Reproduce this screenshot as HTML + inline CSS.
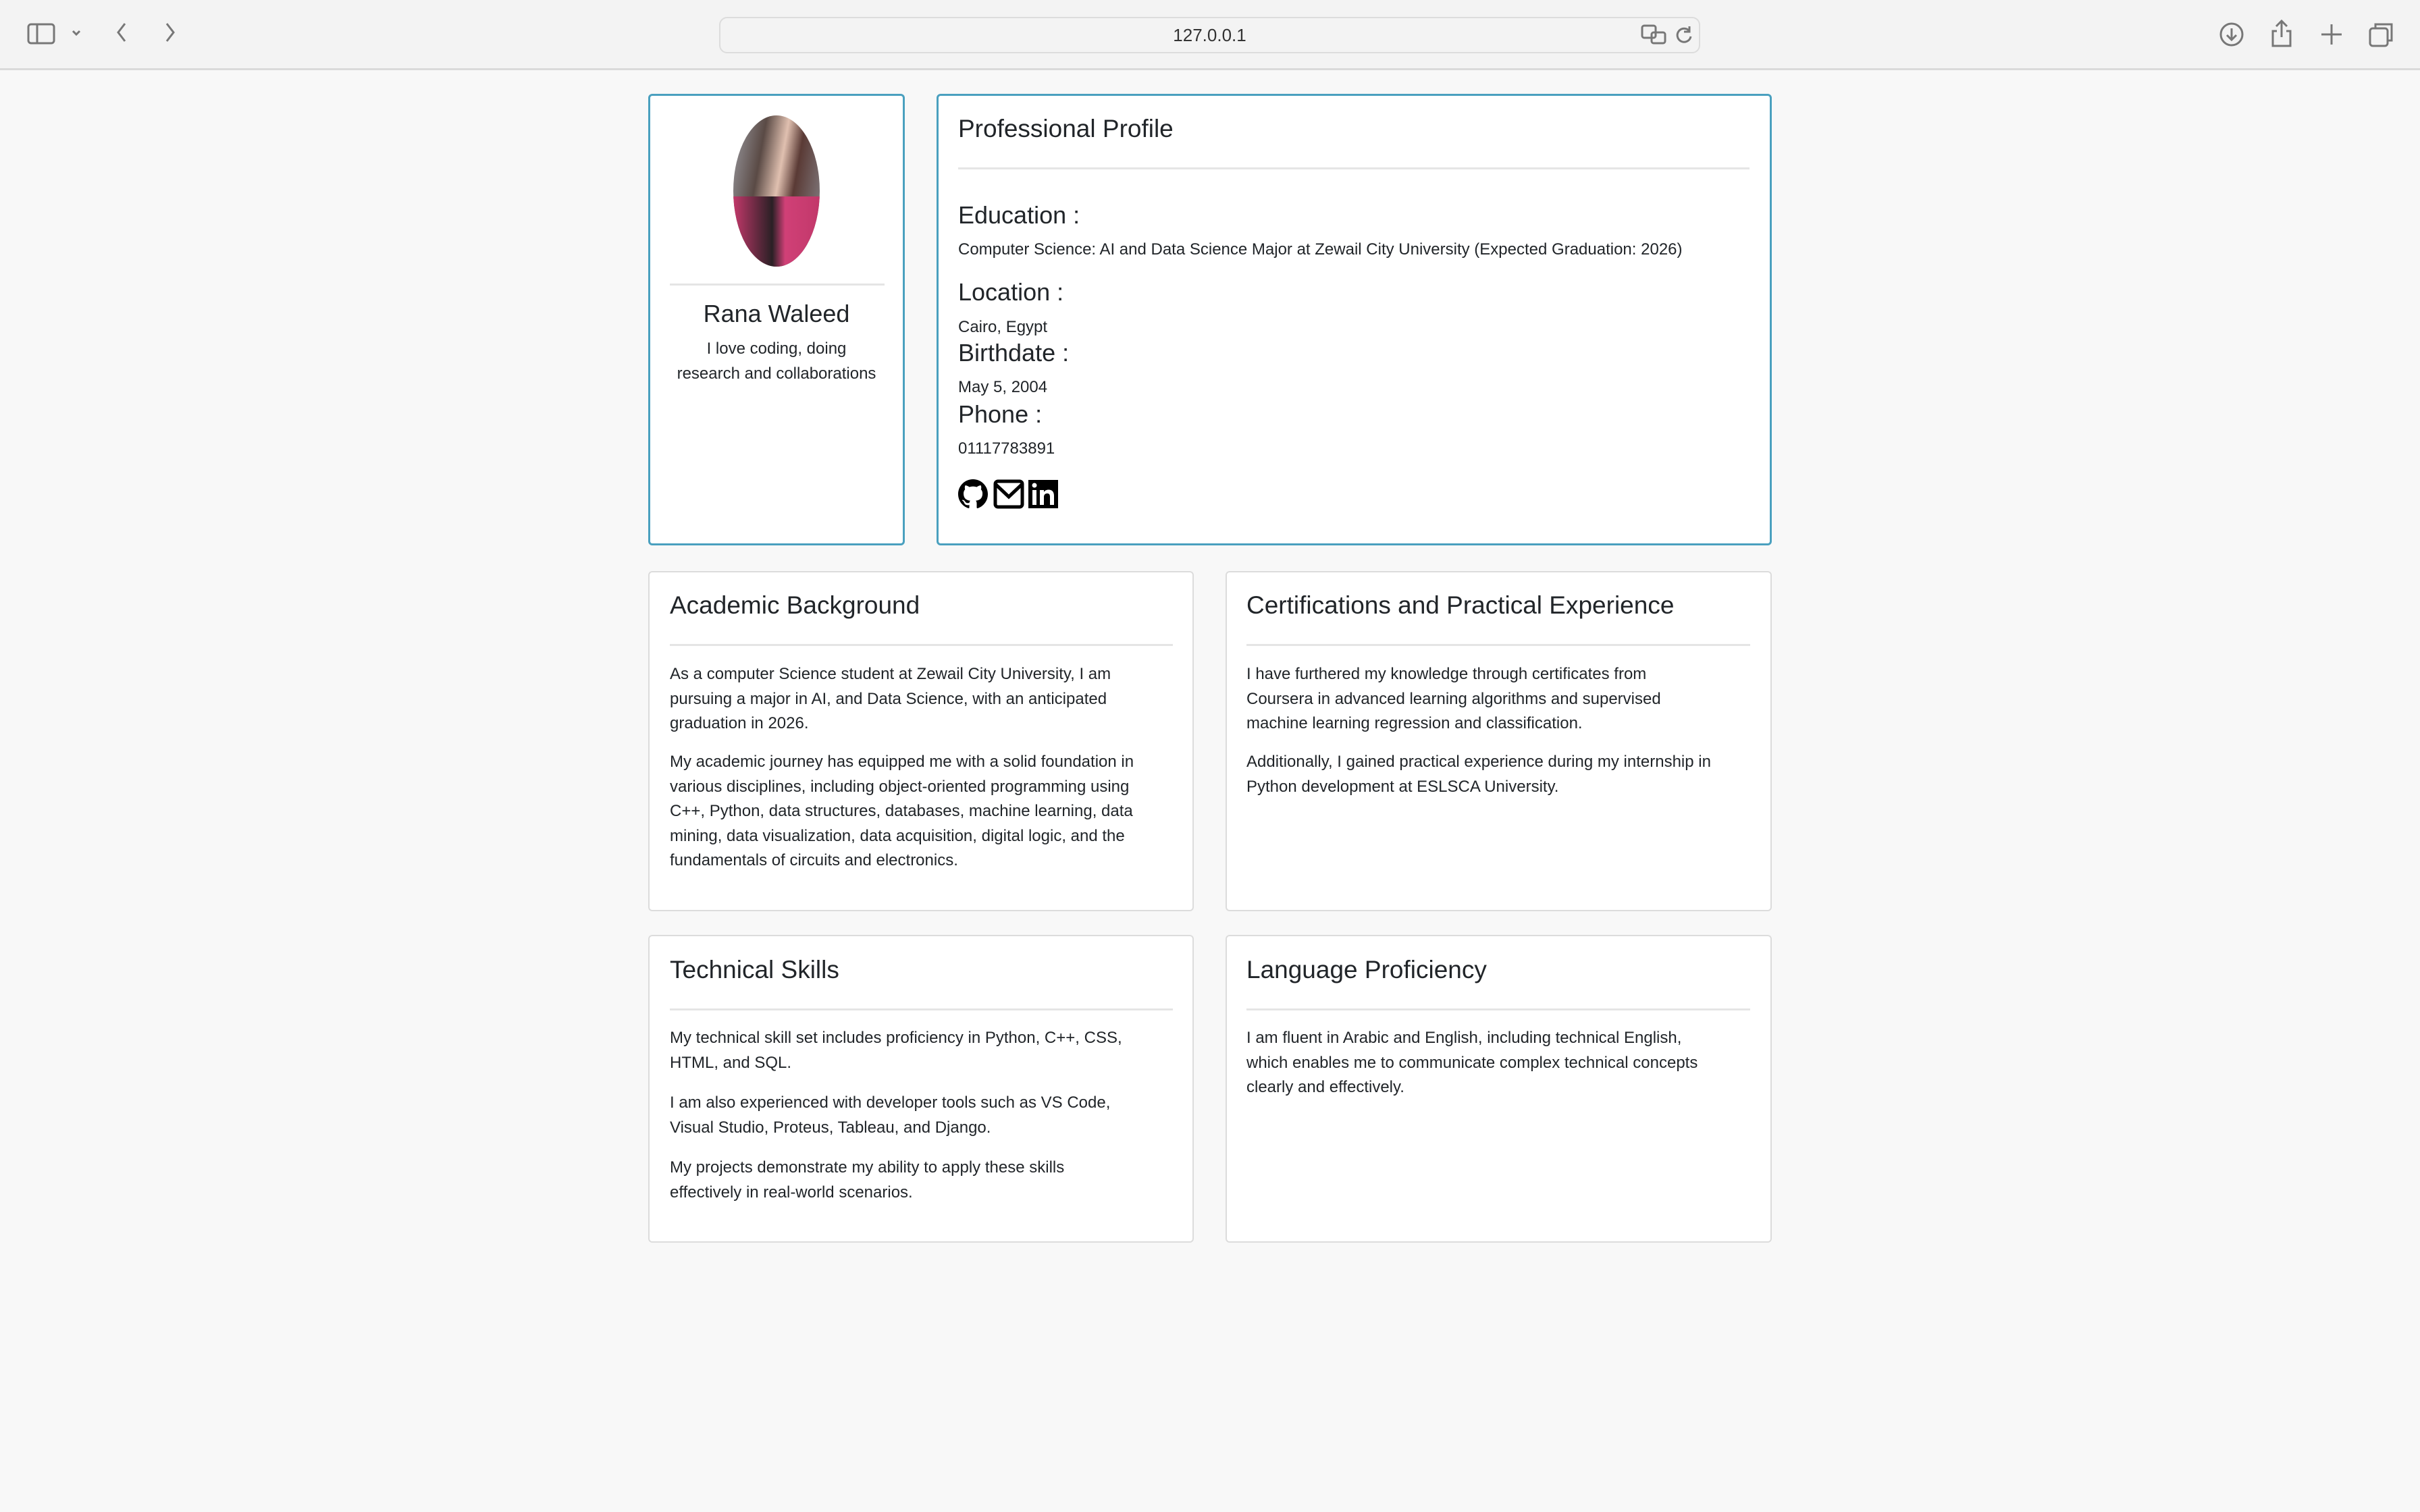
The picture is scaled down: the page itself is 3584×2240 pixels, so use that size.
<!DOCTYPE html>
<html><head><meta charset="utf-8"><style>
*{box-sizing:border-box;margin:0;padding:0}
body{width:3584px;height:2240px;background:#f8f8f8;font-family:"Liberation Sans",sans-serif;color:#212529;position:relative;overflow:hidden}
.bar{position:absolute;left:0;top:0;width:3584px;height:104px;background:#f3f3f3;border-bottom:3px solid #dadada}
.url{position:absolute;left:1065px;top:25px;width:1453px;height:54px;border:2px solid #dcdcdc;border-radius:12px;background:#f3f3f3;text-align:center;font-size:26px;line-height:50px;color:#333}
.card{position:absolute;background:#fff;border:2px solid #dcdcdc;border-radius:6px}
.blue{border:3px solid #4aa0bf}
.a{position:absolute;white-space:nowrap}
.h{font-size:37px}
.t{font-size:24px;line-height:36.5px}
.hr{position:absolute;height:3px;background:#e5e5e5}
.ic{position:absolute;top:40px;stroke:#777;fill:none;stroke-width:3}
</style></head><body>
<div class="bar">
<svg class="ic" style="left:40px;top:34px" width="42" height="32"><rect x="2" y="2" width="38" height="28" rx="4"/><line x1="15" y1="2" x2="15" y2="30"/></svg>
<svg class="ic" style="left:106px;top:44px" width="14" height="10"><path d="M2 2l5 5 5-5"/></svg>
<svg class="ic" style="left:172px;top:33px" width="16" height="30"><path d="M13 2L3 15l10 13"/></svg>
<svg class="ic" style="left:244px;top:33px" width="16" height="30"><path d="M3 2l10 13L3 28"/></svg>
<div class="url">127.0.0.1</div>
<svg class="ic" style="left:2430px;top:36px" width="40" height="30"><rect x="2" y="2" width="20" height="18" rx="3"/><rect x="16" y="12" width="20" height="16" rx="3"/></svg>
<svg class="ic" style="left:2480px;top:36px" width="28" height="30"><path d="M22 10A10 10 0 1 0 24 18M22 3v8h-8"/></svg>
<svg class="ic" style="left:3286px;top:32px" width="38" height="38"><circle cx="19" cy="19" r="16"/><path d="M19 10v17M12 20l7 7 7-7"/></svg>
<svg class="ic" style="left:3362px;top:28px" width="34" height="42"><path d="M17 3v24M9 11l8-8 8 8M10 18H4v22h26V18h-6"/></svg>
<svg class="ic" style="left:3436px;top:34px" width="34" height="34"><path d="M17 2v30M2 17h30"/></svg>
<svg class="ic" style="left:3508px;top:32px" width="38" height="38"><rect x="2" y="10" width="26" height="26" rx="4"/><path d="M10 10V4h24v24h-6"/></svg>
</div>

<div class="card blue" style="left:960px;top:139px;width:380px;height:669px"></div>
<div class="a" style="left:1086px;top:171px;width:128px;height:224px;border-radius:50%;overflow:hidden;background:linear-gradient(100deg,#9a9aa0 0%,#5a4a45 30%,#e0c0b0 50%,#5a3a35 65%,#8a8a90 100%)"><div style="position:absolute;left:0;top:120px;width:128px;height:110px;background:linear-gradient(90deg,#c2386a,#2a2025 45%,#d04077 60%,#c2386a)"></div></div>
<div class="hr" style="left:992px;top:420px;width:318px"></div>
<div class="a h" style="left:960px;width:380px;text-align:center;top:444px;font-size:36px">Rana Waleed</div>
<div class="a t" style="left:960px;width:380px;text-align:center;top:499px">I love coding, doing<br>research and collaborations</div>

<div class="card blue" style="left:1387px;top:139px;width:1237px;height:669px"></div>
<div class="a h" style="left:1419px;top:170px">Professional Profile</div>
<div class="hr" style="left:1419px;top:248px;width:1172px"></div>
<div class="a h" style="left:1419px;top:298px;font-size:36px">Education :</div>
<div class="a t" style="left:1419px;top:352px">Computer Science: AI and Data Science Major at Zewail City University (Expected Graduation: 2026)</div>
<div class="a h" style="left:1419px;top:412px;font-size:36px">Location :</div>
<div class="a t" style="left:1419px;top:467px">Cairo, Egypt</div>
<div class="a h" style="left:1419px;top:502px;font-size:36px">Birthdate :</div>
<div class="a t" style="left:1419px;top:556px">May 5, 2004</div>
<div class="a h" style="left:1419px;top:593px;font-size:36px">Phone :</div>
<div class="a t" style="left:1419px;top:647px">01117783891</div>
<svg class="a" style="left:1419px;top:710px" width="44" height="44" viewBox="0 0 16 16"><path d="M8 0C3.58 0 0 3.58 0 8c0 3.540 2.29 6.53 5.47 7.59.4.07.55-.17.55-.38v-1.34c-2.23.48-2.7-1.07-2.7-1.070-.36-.92-.89-1.17-.89-1.17-.73-.5.06-.49.06-.49.8.06 1.23.83 1.23.83.71 1.22 1.87.87 2.33.66.07-.52.28-.87.51-1.07-1.78-.2-3.64-.89-3.64-3.95 0-.87.31-1.59.82-2.15-.08-.2-.36-1.02.08-2.12 0 0 .67-.21 2.2.82a7.5 7.5 0 0 1 4 0c1.53-1.04 2.2-.82 2.2-.82.44 1.1.16 1.92.08 2.12.51.56.82 1.27.82 2.15 0 3.07-1.87 3.75-3.65 3.95.29.25.54.73.54 1.48v2.2c0 .21.15.46.55.38A8 8 0 0 0 16 8c0-4.42-3.58-8-8-8z"/></svg>
<svg class="a" style="left:1471px;top:710px" width="46" height="44" viewBox="0 0 46 44"><rect x="3" y="3" width="40" height="38" rx="4" fill="none" stroke="#000" stroke-width="5"/><path d="M4 8l19 18L42 8" fill="none" stroke="#000" stroke-width="5"/></svg>
<svg class="a" style="left:1523px;top:711px" width="44" height="42" viewBox="0 0 44 42"><rect width="44" height="42" fill="#000"/><rect x="6" y="15" width="6" height="22" fill="#fff"/><circle cx="9" cy="8" r="3.5" fill="#fff"/><path d="M17 15h6v3c1.5-2.5 4-3.5 7-3.5 5 0 8 3 8 9V37h-6V25c0-3-1-5-4-5s-5 2-5 5v12h-6z" fill="#fff"/></svg>

<div class="card" style="left:960px;top:846px;width:808px;height:504px"></div>
<div class="a h" style="left:992px;top:876px">Academic Background</div>
<div class="hr" style="left:992px;top:954px;width:745px"></div>
<div class="a t" style="left:992px;top:981px">As a computer Science student at Zewail City University, I am<br>pursuing a major in AI, and Data Science, with an anticipated<br>graduation in 2026.</div>
<div class="a t" style="left:992px;top:1111px">My academic journey has equipped me with a solid foundation in<br>various disciplines, including object-oriented programming using<br>C++, Python, data structures, databases, machine learning, data<br>mining, data visualization, data acquisition, digital logic, and the<br>fundamentals of circuits and electronics.</div>

<div class="card" style="left:1815px;top:846px;width:809px;height:504px"></div>
<div class="a h" style="left:1846px;top:876px">Certifications and Practical Experience</div>
<div class="hr" style="left:1846px;top:954px;width:746px"></div>
<div class="a t" style="left:1846px;top:981px">I have furthered my knowledge through certificates from<br>Coursera in advanced learning algorithms and supervised<br>machine learning regression and classification.</div>
<div class="a t" style="left:1846px;top:1111px">Additionally, I gained practical experience during my internship in<br>Python development at ESLSCA University.</div>

<div class="card" style="left:960px;top:1385px;width:808px;height:456px"></div>
<div class="a h" style="left:992px;top:1416px">Technical Skills</div>
<div class="hr" style="left:992px;top:1494px;width:745px"></div>
<div class="a t" style="left:992px;top:1520px">My technical skill set includes proficiency in Python, C++, CSS,<br>HTML, and SQL.</div>
<div class="a t" style="left:992px;top:1616px">I am also experienced with developer tools such as VS Code,<br>Visual Studio, Proteus, Tableau, and Django.</div>
<div class="a t" style="left:992px;top:1712px">My projects demonstrate my ability to apply these skills<br>effectively in real-world scenarios.</div>

<div class="card" style="left:1815px;top:1385px;width:809px;height:456px"></div>
<div class="a h" style="left:1846px;top:1416px">Language Proficiency</div>
<div class="hr" style="left:1846px;top:1494px;width:746px"></div>
<div class="a t" style="left:1846px;top:1520px">I am fluent in Arabic and English, including technical English,<br>which enables me to communicate complex technical concepts<br>clearly and effectively.</div>
</body></html>
